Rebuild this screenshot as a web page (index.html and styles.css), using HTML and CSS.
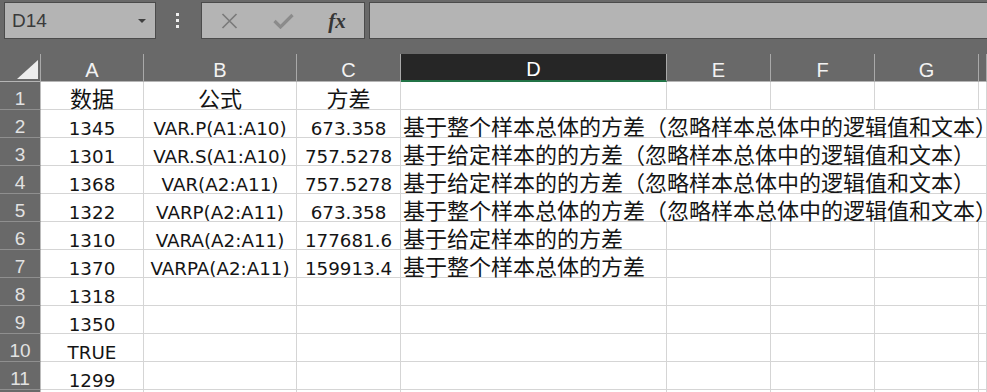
FILE: index.html
```html
<!DOCTYPE html>
<html>
<head>
<meta charset="utf-8">
<link rel="stylesheet" href="styles.css">
</head>
<body>
<div class="toolbar">
  <div class="namebox"><span class="name">D14</span><span class="caret"></span></div>
  <div class="grip"><i></i><i></i><i></i></div>
  <div class="fnbox">
    <span class="fbtn"><svg width="17" height="16" viewBox="0 0 17 16"><path d="M1.5 1 L15.5 15 M15.5 1 L1.5 15" stroke="#7b7b7b" stroke-width="1.7" fill="none"/></svg></span>
    <span class="fbtn"><svg width="21" height="16" viewBox="0 0 21 16"><path d="M1.5 8 L7.5 14 L19.5 2" stroke="#8b8b8b" stroke-width="3.2" fill="none"/></svg></span>
    <span class="fbtn fx">fx</span>
  </div>
  <div class="formula"></div>
</div>
<div class="sheet">
  <div class="corner"><svg width="21" height="19" viewBox="0 0 21 19"><polygon points="21,0 21,19 0,19" fill="#ededed"/></svg></div>
  <div class="ch">A</div><div class="ch">B</div><div class="ch">C</div><div class="ch sel">D</div><div class="ch">E</div><div class="ch">F</div><div class="ch">G</div><div class="ch"></div>

  <div class="rh">1</div><div class="c cjk">数据</div><div class="c cjk">公式</div><div class="c cjk">方差</div><div class="c"></div><div class="c"></div><div class="c"></div><div class="c"></div><div class="c"></div>

  <div class="rh">2</div><div class="c">1345</div><div class="c">VAR.P(A1:A10)</div><div class="c">673.358</div><div class="c cjk l span">基于整个样本总体的方差（忽略样本总体中的逻辑值和文本）</div>

  <div class="rh">3</div><div class="c">1301</div><div class="c">VAR.S(A1:A10)</div><div class="c">757.5278</div><div class="c cjk l span">基于给定样本的的方差（忽略样本总体中的逻辑值和文本）</div>

  <div class="rh">4</div><div class="c">1368</div><div class="c">VAR(A2:A11)</div><div class="c">757.5278</div><div class="c cjk l span">基于给定样本的的方差（忽略样本总体中的逻辑值和文本）</div>

  <div class="rh">5</div><div class="c">1322</div><div class="c">VARP(A2:A11)</div><div class="c">673.358</div><div class="c cjk l span">基于整个样本总体的方差（忽略样本总体中的逻辑值和文本）</div>

  <div class="rh">6</div><div class="c">1310</div><div class="c">VARA(A2:A11)</div><div class="c">177681.6</div><div class="c cjk l">基于给定样本的的方差</div><div class="c"></div><div class="c"></div><div class="c"></div><div class="c"></div>

  <div class="rh">7</div><div class="c">1370</div><div class="c">VARPA(A2:A11)</div><div class="c">159913.4</div><div class="c cjk l">基于整个样本总体的方差</div><div class="c"></div><div class="c"></div><div class="c"></div><div class="c"></div>

  <div class="rh">8</div><div class="c">1318</div><div class="c"></div><div class="c"></div><div class="c"></div><div class="c"></div><div class="c"></div><div class="c"></div><div class="c"></div>

  <div class="rh">9</div><div class="c">1350</div><div class="c"></div><div class="c"></div><div class="c"></div><div class="c"></div><div class="c"></div><div class="c"></div><div class="c"></div>

  <div class="rh">10</div><div class="c">TRUE</div><div class="c"></div><div class="c"></div><div class="c"></div><div class="c"></div><div class="c"></div><div class="c"></div><div class="c"></div>

  <div class="rh">11</div><div class="c">1299</div><div class="c"></div><div class="c"></div><div class="c"></div><div class="c"></div><div class="c"></div><div class="c"></div><div class="c"></div>

  <div class="rh"></div><div class="c"></div><div class="c"></div><div class="c"></div><div class="c"></div><div class="c"></div><div class="c"></div><div class="c"></div><div class="c"></div>
</div>
</body>
</html>
```

FILE: styles.css
```css
html, body {
  margin: 0;
  padding: 0;
}
body {
  background: #696969;
  width: 987px;
  height: 392px;
  overflow: hidden;
  font-family: "Liberation Sans", Arial, sans-serif;
}
.toolbar {
  display: flex;
  align-items: flex-start;
  height: 54px;
  padding: 2px 0 0 4px;
  box-sizing: border-box;
  overflow: hidden;
}
.namebox {
  width: 152px;
  height: 37px;
  box-sizing: border-box;
  border: 1px solid #4b4b4b;
  background: #b4b4b4;
  display: flex;
  align-items: center;
  padding: 0 9px 0 7px;
  flex: none;
}
.name {
  font-size: 19px;
  color: #3a3a3a;
}
.caret {
  margin-left: auto;
  width: 0;
  height: 0;
  border-left: 4px solid transparent;
  border-right: 4px solid transparent;
  border-top: 4px solid #404040;
}
.grip {
  width: 45px;
  height: 37px;
  flex: none;
  box-sizing: border-box;
  padding-right: 3px;
  display: flex;
  flex-direction: column;
  align-items: center;
  justify-content: center;
  gap: 3px;
}
.grip i {
  display: block;
  width: 3px;
  height: 3px;
  background: #efefef;
}
.fnbox {
  width: 164px;
  height: 37px;
  flex: none;
  box-sizing: border-box;
  border: 1px solid #4b4b4b;
  background: #b4b4b4;
  display: grid;
  grid-template-columns: repeat(3, 1fr);
  align-items: center;
  justify-items: center;
}
.fbtn {
  display: flex;
  align-items: center;
  justify-content: center;
}
.fx {
  font-family: "Liberation Serif", serif;
  font-style: italic;
  font-weight: bold;
  font-size: 21px;
  color: #363636;
  line-height: 21px;
  padding-top: 1px;
}
.formula {
  margin-left: 4px;
  margin-right: -2px;
  flex: 1;
  height: 37px;
  box-sizing: border-box;
  border: 1px solid #4b4b4b;
  background: #b4b4b4;
}
.sheet {
  display: grid;
  grid-template-columns: 41px 103px 153px 104px 266px 104px 104px 104px 8px;
  grid-auto-rows: 28px;
  width: 987px;
  height: 338px;
  overflow: hidden;
}
.corner {
  background: #696969;
  border-right: 1px solid #a9a9a9;
  border-bottom: 1px solid #b5b5b5;
  box-sizing: border-box;
  display: flex;
  justify-content: flex-end;
  align-items: flex-end;
  padding: 0 2px 2px 0;
}
.ch {
  background: #696969;
  border-right: 1px solid #a9a9a9;
  border-bottom: 1px solid #b5b5b5;
  box-sizing: border-box;
  display: flex;
  justify-content: center;
  align-items: flex-end;
  color: #f2f2f2;
  font-size: 20px;
  line-height: 22px;
}
.ch.sel {
  background: #262626;
  border-bottom: 2px solid #217346;
  color: #ffffff;
}
.rh {
  background: #696969;
  border-right: 1px solid #bdbdbd;
  border-bottom: 1px solid #8f8f8f;
  box-sizing: border-box;
  display: flex;
  justify-content: center;
  align-items: flex-end;
  color: #e2e2e2;
  font-size: 19px;
  line-height: 21px;
}
.c {
  background: #ffffff;
  border-right: 1px solid #d5d5d5;
  border-bottom: 1px solid #d5d5d5;
  box-sizing: border-box;
  display: flex;
  justify-content: center;
  align-items: flex-end;
  font-family: "DejaVu Sans", sans-serif;
  font-size: 18.3px;
  line-height: 17px;
  color: #141414;
  white-space: nowrap;
}
.cjk {
  font-family: "Noto Sans CJK SC", sans-serif;
  font-size: 22px;
  line-height: 24px;
}
.l {
  justify-content: flex-start;
  padding-left: 2px;
}
.span {
  grid-column: span 5;
}
```
